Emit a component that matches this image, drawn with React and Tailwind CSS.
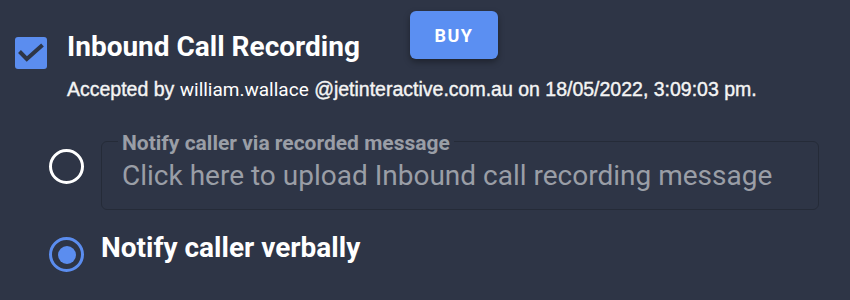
import React from "react";

function Radio({ checked, className }) {
  return checked ? (
    <span className={"flex h-[35px] w-[35px] shrink-0 items-center justify-center rounded-full border-[3px] border-[#5b8def] " + className}>
      <span className="h-[18px] w-[18px] rounded-full bg-[#5b8def]" />
    </span>
  ) : (
    <span className={"h-[35px] w-[35px] shrink-0 rounded-full border-[3.5px] border-white " + className} />
  );
}

export default function App() {
  return (
    <div className="h-[300px] w-[850px] overflow-hidden bg-[#2e3546] pt-[11px] font-['Roboto',sans-serif] text-white">
      <div className="flex items-start pl-[15px]">
        <div className="mt-[26px] h-[32px] w-[32px] rounded-[3px] bg-[#5b8def]">
          <svg width="32" height="32" viewBox="0 0 32 32">
            <path d="M4.5 14.5l7.3 7.5L27.5 8" fill="none" stroke="#2e3546" strokeWidth="4" />
          </svg>
        </div>
        <div className="ml-[20px] mt-[19px] text-[28px] font-bold leading-[34px]">Inbound Call Recording</div>
        <button className="ml-[50px] h-[48px] w-[88px] rounded-[6px] bg-[#5b8ff2] text-[18px] font-bold tracking-[1.4px] text-white shadow-[0_3px_6px_rgba(0,0,0,0.35)]">
          BUY
        </button>
      </div>
      <div className="ml-[67px] mt-[9px] whitespace-nowrap font-['Liberation_Sans',Arial,sans-serif] text-[19.5px] font-normal leading-[22px] text-[#f4f4f4] [-webkit-text-stroke:0.4px_#f4f4f4]">
        Accepted by <span className="font-['Roboto',sans-serif] text-[19px] font-normal text-white [-webkit-text-stroke:0px]">william.wallace</span> @jetinteractive.com.au on 18/05/2022, 3:09:03 pm.
      </div>
      <div className="ml-[49px] mt-[40px] flex items-start gap-[17px]">
        <Radio checked={false} className="mt-[8px]" />
        <div className="relative h-[69px] w-[718px] rounded-[6px] border border-[#252b38]">
          <span className="absolute left-[16px] top-[-11px] bg-[#2e3546] px-[4px] text-[21px] font-bold leading-[24px] text-[#9a9ea6]">
            Notify caller via recorded message
          </span>
          <div className="whitespace-nowrap pl-[20px] pt-[17px] text-[28px] leading-[34px] text-[#9a9ea6]">
            Click here to upload Inbound call recording message
          </div>
        </div>
      </div>
      <div className="ml-[49px] mt-[21px] flex items-start gap-[17px]">
        <Radio checked={true} className="mt-[6px]" />
        <div className="text-[28px] font-bold leading-[34px]">Notify caller verbally</div>
      </div>
    </div>
  );
}
